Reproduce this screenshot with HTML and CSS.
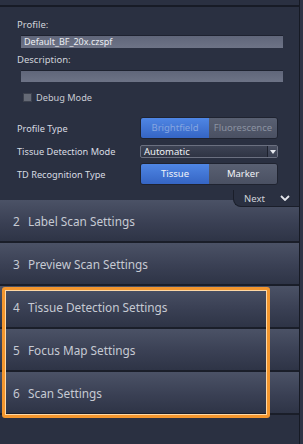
FILE: index.html
```html
<!DOCTYPE html>
<html lang="en">
<head>
    <meta charset="UTF-8">
    <meta name="viewport" content="width=device-width, initial-scale=1.0">
    <title>Scan Profile</title>
    <link rel="stylesheet" href="styles.css">
</head>
<body>

    <div class="workflow">
        <div class="topbar"></div>

        <!-- Profile settings -->
        <div class="settings">
            <div class="field-label first">Profile:</div>
            <div class="text-box">Default_BF_20x.czspf</div>
            <div class="field-label">Description:</div>
            <div class="text-box short"></div>

            <label class="check-row">
                <span class="check-box"></span>
                Debug Mode
            </label>

            <div class="row row-tall">
                <span class="row-label">Profile Type</span>
                <div class="toggle">
                    <span class="toggle-btn active disabled">Brightfield</span>
                    <span class="toggle-btn disabled">Fluorescence</span>
                </div>
            </div>

            <div class="row row-select">
                <span class="row-label">Tissue Detection Mode</span>
                <div class="select">
                    <span class="select-value">Automatic</span>
                    <span class="select-arrow">
                        <svg width="6" height="4" viewBox="0 0 6 4"><path d="M0 0 H6 L3 4 Z" fill="#e8eaf0"/></svg>
                    </span>
                </div>
            </div>

            <div class="row row-tall row-td">
                <span class="row-label">TD Recognition Type</span>
                <div class="toggle">
                    <span class="toggle-btn active">Tissue</span>
                    <span class="toggle-btn">Marker</span>
                </div>
            </div>

            <div class="next-row">
                <div class="next-tab">
                    Next
                    <svg width="10" height="6" viewBox="0 0 10 6"><path d="M1 1 L5 5 L9 1" fill="none" stroke="#e4e6ec" stroke-width="1.8"/></svg>
                </div>
            </div>
        </div>

        <!-- Workflow steps -->
        <div class="step"><span class="step-num">2</span>Label Scan Settings</div>
        <div class="step"><span class="step-num">3</span>Preview Scan Settings</div>

        <div class="step-group">
            <div class="step"><span class="step-num">4</span>Tissue Detection Settings</div>
            <div class="step"><span class="step-num">5</span>Focus Map Settings</div>
            <div class="step"><span class="step-num">6</span>Scan Settings</div>
            <div class="highlight"></div>
        </div>
    </div>

</body>
</html>
```

FILE: styles.css
```css
/* Base layout */
body {
    margin: 0;
    background-color: #2e3445;
    font-family: "Noto Sans", "Liberation Sans", sans-serif;
    color: #d4d7de;
    height: 444px;
    overflow: hidden;
}

.workflow {
    width: 299px;
    height: 444px;
    background-color: #2a3041;
    border-right: 1px solid #161a24;
}

.topbar {
    height: 5px;
    border-bottom: 2px solid #171b26;
}

.settings {
    padding-left: 17px;
}

.field-label {
    font-size: 9.5px;
    line-height: 12px;
    height: 12px;
    margin-top: 6px;
    color: #d0d3da;
}

.field-label.first {
    margin-top: 12px;
}

.text-box {
    margin: 4px 0 0 4px;
    width: 262px;
    height: 13px;
    padding-left: 3px;
    background: linear-gradient(#60667a, #6d7386);
    border-top: 1px solid #1e2230;
    font-size: 9px;
    line-height: 12px;
    color: #eceef2;
    box-sizing: border-box;
}

.text-box.short {
    height: 12px;
}

.check-row {
    display: flex;
    align-items: center;
    gap: 4px;
    margin: 9px 0 0 6px;
    height: 13px;
    font-size: 9.2px;
    color: #c8cbd3;
}

.check-box {
    width: 7px;
    height: 7px;
    background-color: #656a76;
    border: 1px solid #3c414e;
}

/* Label + control rows */
.row {
    display: flex;
    align-items: center;
    margin-top: 13px;
    height: 22px;
}

.row-select {
    margin-top: 6px;
    height: 13px;
}

.row-td {
    margin-top: 5px;
}

.row-label {
    width: 123px;
    font-size: 9.2px;
    color: #d8dbe1;
}

.toggle {
    display: flex;
    width: 138px;
    height: 22px;
    border-radius: 3px;
    overflow: hidden;
    border: 1px solid #1f2330;
    box-sizing: border-box;
}

.toggle-btn {
    flex: 1;
    text-align: center;
    font-size: 9.5px;
    line-height: 20px;
    color: #f2f4f8;
    background: linear-gradient(#596072, #4a5062);
}

.toggle-btn.active {
    background: linear-gradient(#4f86e4, #3565c4);
}

.toggle-btn.disabled {
    color: #8c93a2;
}

.toggle-btn.active.disabled {
    color: #86a6e0;
}

.select {
    display: flex;
    width: 138px;
    height: 13px;
    border: 1px solid #6b7080;
    border-radius: 2px;
    box-sizing: border-box;
    background: linear-gradient(#3d4354, #2f3444);
}

.select-value {
    flex: 1;
    padding-left: 3px;
    font-size: 9.5px;
    line-height: 11px;
    color: #f0f2f6;
}

.select-arrow {
    width: 9px;
    display: flex;
    align-items: center;
    justify-content: center;
    border-left: 1px solid #1c202c;
    background: linear-gradient(#4a5062, #3a4052);
}

/* Next tab hanging over the first step */
.next-row {
    display: flex;
    justify-content: flex-end;
    margin-top: 5px;
    margin-bottom: -7px;
    position: relative;
    z-index: 1;
}

.next-tab {
    width: 66px;
    height: 17px;
    display: flex;
    align-items: center;
    gap: 15px;
    padding-left: 10px;
    box-sizing: border-box;
    background-color: #2a3041;
    border-left: 1px solid #1a1e2a;
    border-bottom: 1px solid #1a1e2a;
    border-bottom-left-radius: 8px;
    font-size: 9.5px;
    color: #cfd2d9;
}

/* Workflow steps */
.step {
    height: 41px;
    border-bottom: 2px solid #1a1e29;
    background: linear-gradient(#4b5266, #3a4054 55%, #2e3446);
    display: flex;
    align-items: center;
    padding-left: 13px;
    font-size: 11.8px;
    color: #c6cad3;
}

.step-num {
    width: 15px;
}

.step-group {
    position: relative;
}

.highlight {
    position: absolute;
    top: 1px;
    left: 2px;
    width: 268px;
    height: 131px;
    border: 3px solid #f3962e;
    border-radius: 3px;
    box-sizing: border-box;
    box-shadow: inset 0 0 0 1px #ffd8a4;
}
```
